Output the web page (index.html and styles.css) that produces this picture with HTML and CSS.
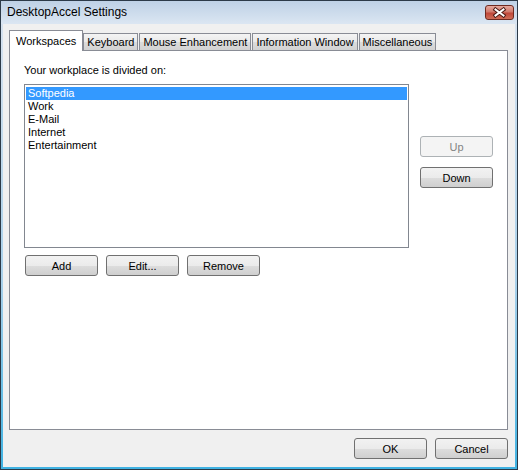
FILE: index.html
```html
<!DOCTYPE html>
<html>
<head>
<meta charset="utf-8">
<title>DesktopAccel Settings</title>
<link rel="stylesheet" href="styles.css">
</head>
<body>
<div class="window">
  <div class="titlebar">
    <span class="title">DesktopAccel Settings</span>
    <div class="close">
      <svg width="29" height="15" viewBox="0 0 29 15">
        <path d="M10.5 4.5 L18.5 10.5 M18.5 4.5 L10.5 10.5" stroke="#4a1a14" stroke-width="4" stroke-linecap="square" fill="none"/>
        <path d="M10.5 4.5 L18.5 10.5 M18.5 4.5 L10.5 10.5" stroke="#ffffff" stroke-width="2" stroke-linecap="square" fill="none"/>
      </svg>
    </div>
  </div>
  <div class="client">
    <div class="tabs">
      <div class="tab active">Workspaces</div>
      <div class="tab">Keyboard</div>
      <div class="tab">Mouse Enhancement</div>
      <div class="tab">Information Window</div>
      <div class="tab">Miscellaneous</div>
    </div>
    <div class="panel">
      <div class="label">Your workplace is divided on:</div>
      <div class="row">
        <div class="listbox">
          <div class="item selected">Softpedia</div>
          <div class="item">Work</div>
          <div class="item">E-Mail</div>
          <div class="item">Internet</div>
          <div class="item">Entertainment</div>
        </div>
        <div class="side">
          <button class="btn" disabled>Up</button>
          <button class="btn">Down</button>
        </div>
      </div>
      <div class="btnrow">
        <button class="btn">Add</button>
        <button class="btn">Edit...</button>
        <button class="btn">Remove</button>
      </div>
    </div>
    <div class="footer">
      <button class="btn">OK</button>
      <button class="btn">Cancel</button>
    </div>
  </div>
</div>
</body>
</html>
```
FILE: styles.css
```css
html, body {
  margin: 0;
  padding: 0;
  background: #ffffff;
}

body {
  font-family: "Liberation Sans", Arial, sans-serif;
  font-size: 11px;
  color: #000;
}

.window {
  width: 518px;
  height: 470px;
  box-sizing: border-box;
  border: 1px solid #2c3a48;
  background: linear-gradient(#c4d6ea 0, #d6e2ef 24px, #a8d0ea 60%, #3fb2e2 100%);
  display: flex;
  flex-direction: column;
}

.titlebar {
  height: 23px;
  flex: none;
  display: flex;
  align-items: flex-start;
  background: linear-gradient(#bed1e6, #dbe6f2);
}

.title {
  font-size: 12px;
  line-height: 23px;
  padding-left: 6px;
  color: #000;
}

.close {
  margin-left: auto;
  margin-right: 3px;
  margin-top: 4px;
  width: 29px;
  height: 15px;
  box-sizing: border-box;
  border: 1px solid #6e2a20;
  border-radius: 3px;
  background: linear-gradient(#e6a99e 0%, #d17a6c 45%, #c0483a 55%, #cf6d57 100%);
  display: flex;
  align-items: center;
  justify-content: center;
  overflow: hidden;
}

.close svg {
  display: block;
  margin: -1px;
}

.client {
  flex: 1;
  margin: 0 2px 2px 2px;
  background: #f0f0f0;
  padding: 6px 7px 8px 6px;
  display: flex;
  flex-direction: column;
  min-height: 0;
}

.tabs {
  height: 20px;
  flex: none;
  display: flex;
  align-items: flex-end;
}

.tab {
  height: 17px;
  box-sizing: border-box;
  border: 1px solid #898c95;
  border-bottom: none;
  padding: 0 3px;
  margin-right: 1px;
  background: linear-gradient(#f4f4f4 0%, #e9e9e9 50%, #dcdcdc 51%, #d2d2d2 100%);
  display: flex;
  align-items: center;
  white-space: nowrap;
}

.tab.active {
  height: 21px;
  margin-bottom: -1px;
  padding: 0 6px;
  background: #ffffff;
  position: relative;
  z-index: 1;
  margin-right: 0;
}

.panel {
  flex: 1;
  border: 1px solid #898c95;
  background: #ffffff;
  padding: 13px 14px 0 14px;
  min-height: 0;
}

.label {
  line-height: 13px;
  margin-bottom: 7px;
}

.row {
  display: flex;
  align-items: flex-start;
}

.listbox {
  width: 387px;
  height: 164px;
  box-sizing: border-box;
  border: 1px solid #828790;
  padding: 2px 1px;
  background: #fff;
}

.item {
  height: 13px;
  line-height: 13px;
  padding-left: 2px;
  white-space: nowrap;
}

.item.selected {
  background: #3399ff;
  color: #ffffff;
}

.side {
  margin-left: 11px;
  padding-top: 52px;
  display: flex;
  flex-direction: column;
  gap: 10px;
}

.btn {
  width: 73px;
  height: 21px;
  box-sizing: border-box;
  border: 1px solid #707070;
  border-radius: 3px;
  background: linear-gradient(#f2f2f2 0%, #ebebeb 50%, #dddddd 51%, #cfcfcf 100%);
  font-family: "Liberation Sans", Arial, sans-serif;
  font-size: 11px;
  font-weight: normal;
  color: #000;
  padding: 0;
  margin: 0;
}

.btn:disabled {
  border-color: #adb2b5;
  background: #f4f4f4;
  color: #838383;
}

.btnrow {
  margin-top: 7px;
  margin-left: 1px;
  display: flex;
  gap: 8px;
}

.footer {
  margin-top: 8px;
  flex: none;
  display: flex;
  justify-content: flex-end;
  gap: 8px;
}
```
